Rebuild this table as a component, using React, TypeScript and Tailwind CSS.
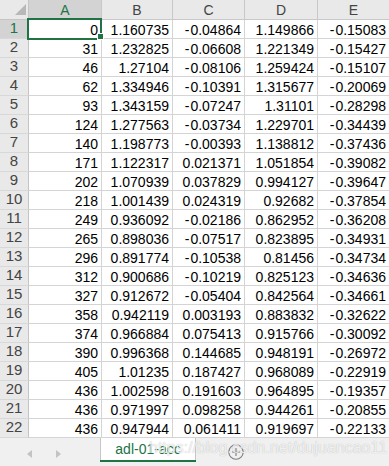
const COLS = ["A", "B", "C", "D", "E"];
const WIDTHS = ["w-[73px]", "w-[71px]", "w-[72px]", "w-[73px]", "w-[72px]"];

// sheet rows: A..E
const ROWS: string[][] = [
  ["0", "1.160735", "-0.04864", "1.149866", "-0.15083"],
  ["31", "1.232825", "-0.06608", "1.221349", "-0.15427"],
  ["46", "1.27104", "-0.08106", "1.259424", "-0.15107"],
  ["62", "1.334946", "-0.10391", "1.315677", "-0.20069"],
  ["93", "1.343159", "-0.07247", "1.31101", "-0.28298"],
  ["124", "1.277563", "-0.03734", "1.229701", "-0.34439"],
  ["140", "1.198773", "-0.00393", "1.138812", "-0.37436"],
  ["171", "1.122317", "0.021371", "1.051854", "-0.39082"],
  ["202", "1.070939", "0.037829", "0.994127", "-0.39647"],
  ["218", "1.001439", "0.024319", "0.92682", "-0.37854"],
  ["249", "0.936092", "-0.02186", "0.862952", "-0.36208"],
  ["265", "0.898036", "-0.07517", "0.823895", "-0.34931"],
  ["296", "0.891774", "-0.10538", "0.81456", "-0.34734"],
  ["312", "0.900686", "-0.10219", "0.825123", "-0.34636"],
  ["327", "0.912672", "-0.05404", "0.842564", "-0.34661"],
  ["358", "0.942119", "0.003193", "0.883832", "-0.32622"],
  ["374", "0.966884", "0.075413", "0.915766", "-0.30092"],
  ["390", "0.996368", "0.144685", "0.948191", "-0.26972"],
  ["405", "1.01235", "0.187427", "0.968089", "-0.22919"],
  ["436", "1.002598", "0.191603", "0.964895", "-0.19357"],
  ["436", "0.971997", "0.098258", "0.944261", "-0.20855"],
  ["436", "0.947944", "0.061411", "0.919697", "-0.22133"],
];

const CellValue = ({ value }: { value: string }) => {
  // the minus sign sits a little apart from the digits
  if (value.startsWith("-")) {
    return (
      <>
        <span className="mr-[1px]">-</span>
        {value.slice(1)}
      </>
    );
  }
  return <>{value}</>;
};

const App = () => {
  return (
    <div className="relative w-[389px] h-[466px] overflow-hidden bg-white font-['Liberation_Sans',Arial,sans-serif]">
      {/* Grid */}
      <div className="w-[390px] h-[438px]">
        {/* Column headers */}
        <div className="flex h-[20px]">
          <div className="relative w-[29px] h-full shrink-0 bg-[#e9e9e9] border-r border-b border-[#c4c4c4]">
            <div className="absolute left-[15px] top-[4px] w-0 h-0 border-l-[11px] border-l-transparent border-b-[11px] border-b-[#b8b8b8]" />
          </div>
          {COLS.map((c, i) => (
            <div
              key={c}
              className={`${WIDTHS[i]} h-full shrink-0 border-r border-b border-[#c8c8c8] text-center text-[14px] leading-[19px] pt-[1px] ${
                i === 0
                  ? "bg-[#d3d3d3] text-[#217346]"
                  : "bg-[#e9e9e9] text-[#444]"
              }`}
            >
              {c}
            </div>
          ))}
        </div>

        {/* Data rows */}
        {ROWS.map((row, r) => (
          <div key={r} className="flex h-[19px]">
            <div
              className={`w-[29px] h-full shrink-0 border-r border-b border-r-[#c4c4c4] border-b-[#d8d8d8] text-center text-[15px] leading-[16px] ${
                r === 0
                  ? "bg-[#d3d3d3] text-[#217346]"
                  : "bg-[#e9e9e9] text-[#444]"
              }`}
            >
              {r + 1}
            </div>
            {row.map((v, i) => (
              <div
                key={i}
                className={`${WIDTHS[i]} h-full shrink-0 overflow-hidden whitespace-nowrap border-r border-b border-[#d4d4d4] text-right pr-[3px] pt-[1px] text-[14px] leading-[18px] text-black`}
              >
                <CellValue value={v} />
              </div>
            ))}
          </div>
        ))}
      </div>

      {/* Sheet tab bar */}
      <div className="flex h-[28px] bg-[#f0f0f0]">
        <div className="flex w-[100px] shrink-0 items-center pl-[27px] pt-[3px]">
          <div className="w-0 h-0 border-y-[4px] border-y-transparent border-r-[5px] border-r-[#c3c3c3]" />
          <div className="ml-[24px] w-0 h-0 border-y-[4px] border-y-transparent border-l-[5px] border-l-[#c3c3c3]" />
        </div>
        <div className="flex flex-col w-[96px] h-[24px] shrink-0 bg-white border-x border-[#c6c6c6]">
          <div className="flex-1 text-center text-[14px] leading-[20px] pt-[1px] text-[#217346]">
            adl-01-acc
          </div>
          <div className="h-[2px] bg-[#217346] -mx-px" />
        </div>
        <div className="flex items-center pl-[32px] pb-[1px]">
          <svg width="16" height="16" viewBox="0 0 16 16" fill="none">
            <circle cx="8" cy="8" r="7.2" stroke="#7d7d7d" strokeWidth="1.1" />
            <path d="M8 4v8M4 8h8" stroke="#7d7d7d" strokeWidth="1.1" />
          </svg>
        </div>
      </div>

      {/* Active cell A1 */}
      <div className="absolute left-[27px] top-[18px] w-[75px] h-[22px] border-2 border-[#217346]" />
      <div className="absolute left-[97px] top-[33px] w-[7px] h-[7px] bg-[#217346] border border-white" />

      {/* Watermark */}
      <div className="absolute left-[149px] top-[438px] text-[16px] leading-[20px] text-white/80 [text-shadow:0_0_1px_rgba(0,0,0,0.3)] whitespace-nowrap pointer-events-none">
        https://blog.csdn.net/dujuancao11
      </div>
    </div>
  );
};

export default App;
